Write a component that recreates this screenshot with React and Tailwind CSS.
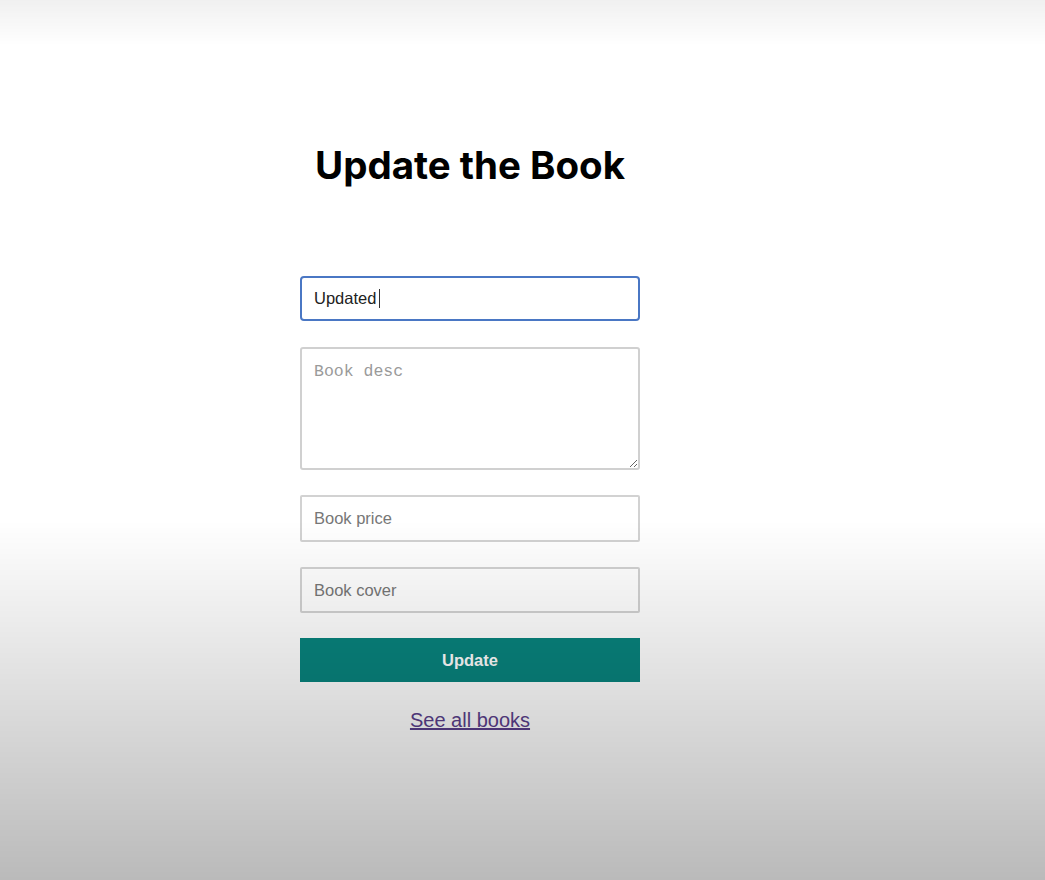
export default function App() {
  return (
    <div className="relative min-h-screen bg-white font-['Liberation_Sans',Arial,sans-serif]">
      {/* form column */}
      <div className="w-[340px] ml-[300px] pt-[142px] pb-[120px]">
        <h1 className="text-center font-bold text-[38.5px] leading-[46px] text-black font-['Inter',sans-serif]">
          Update the Book
        </h1>

        <form className="mt-[88px] flex flex-col gap-[25px]">
          <div className="h-[45px] flex items-center border-2 border-[#4a77c4] rounded-[4px] px-[12px] text-[16.5px] text-[#222] bg-white">
            Updated
            <span className="ml-[3px] w-px h-[19px] bg-[#333]" />
          </div>

          <textarea
            placeholder="Book desc"
            className="h-[123px] mt-px border-2 border-[#d0d0d0] rounded-[3px] px-[12px] pt-[13px] text-[16.5px] leading-[20px] font-['Liberation_Mono',monospace] placeholder:text-[#9a9a9a] outline-none bg-white"
          />

          <input
            placeholder="Book price"
            className="h-[47px] border-2 border-[#d2d2d2] rounded-[2px] px-[12px] text-[16.5px] placeholder:text-[#777] outline-none bg-white"
          />

          <input
            placeholder="Book cover"
            className="h-[46px] border-2 border-[#d2d2d2] rounded-[2px] px-[12px] text-[16.5px] placeholder:text-[#777] outline-none bg-white"
          />

          <button
            type="button"
            className="h-[44px] bg-[#08847e] text-white font-bold text-[16.5px]"
          >
            Update
          </button>
        </form>

        <div className="mt-[26px] text-center">
          <a href="#" className="text-[20px] leading-[24px] text-[#5b3f8c] underline">
            See all books
          </a>
        </div>
      </div>

      {/* video vignette over the page */}
      <div className="pointer-events-none fixed inset-0 bg-[linear-gradient(to_bottom,rgba(0,0,0,0.06)_0px,rgba(0,0,0,0)_45px,rgba(0,0,0,0)_520px,rgba(0,0,0,0.27)_880px)]" />
    </div>
  );
}
